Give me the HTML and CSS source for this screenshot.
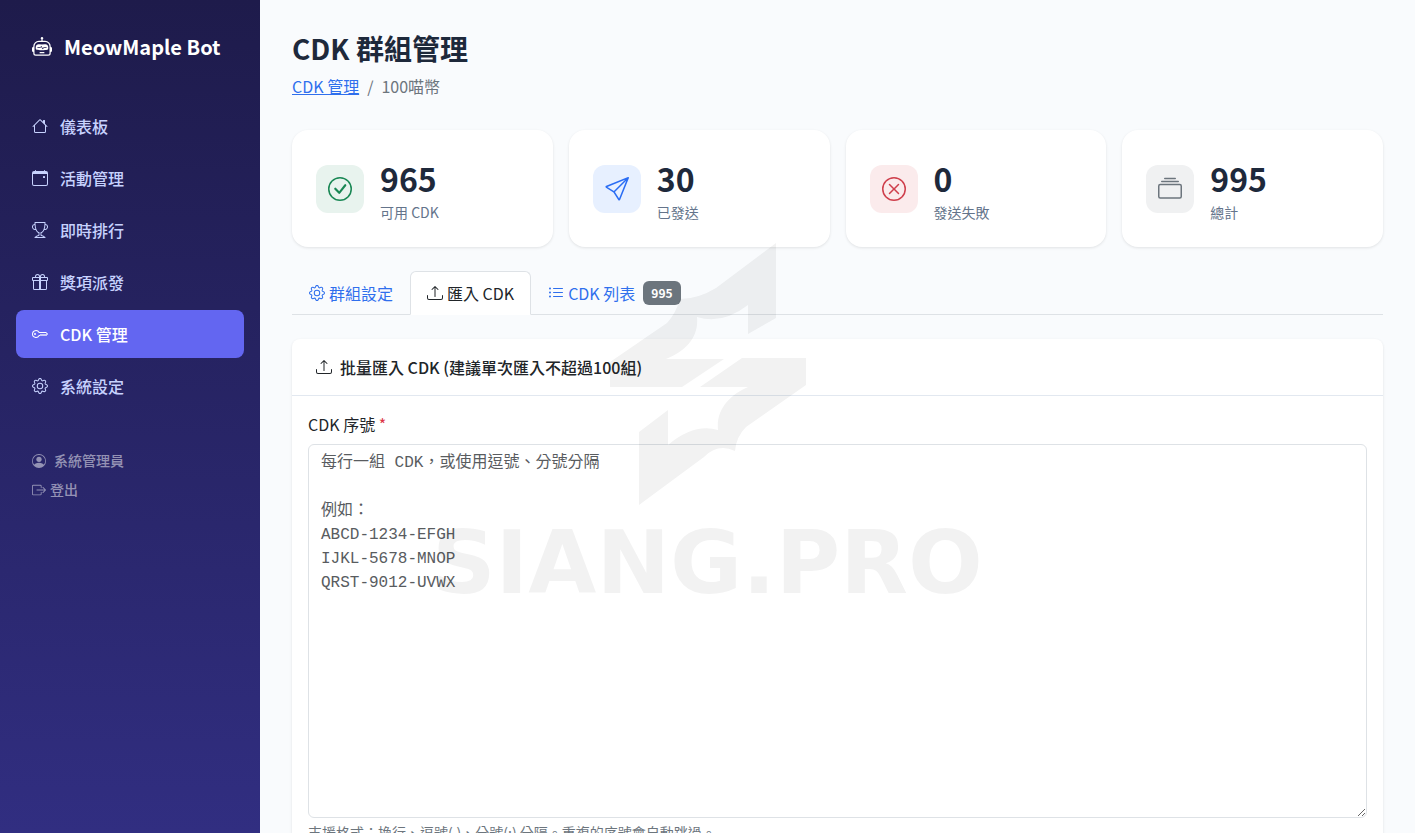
FILE: index.html
```html
<!DOCTYPE html>
<html lang="zh-Hant">
  <head>
    <title>CDK 群組管理</title>
    <meta charset="UTF-8">
    <meta name="viewport" content="width=device-width, initial-scale=1.0">
    <link rel="stylesheet" href="styles.css">
  </head>
  <body>
    <!-- icon sprite -->
    <svg class="sprite" aria-hidden="true">
      <symbol id="robot" viewBox="0 0 16 16">
        <path d="M6 12.5a.5.5 0 0 1 .5-.5h3a.5.5 0 0 1 0 1h-3a.5.5 0 0 1-.5-.5M3 8.062C3 6.76 4.235 5.765 5.53 5.886a26.6 26.6 0 0 0 4.94 0C11.765 5.765 13 6.76 13 8.062v1.157a.93.93 0 0 1-.765.935c-.845.147-2.34.346-4.235.346s-3.39-.2-4.235-.346A.93.93 0 0 1 3 9.219zm4.542-.827a.25.25 0 0 0-.217.068l-.92.9a25 25 0 0 1-1.871-.183.25.25 0 0 0-.068.495c.55.076 1.232.149 2.02.193a.25.25 0 0 0 .189-.071l.754-.736.847 1.71a.25.25 0 0 0 .404.062l.932-.97a25 25 0 0 0 1.922-.188.25.25 0 0 0-.068-.495c-.538.074-1.207.145-1.98.189a.25.25 0 0 0-.166.076l-.754.785-.842-1.7a.25.25 0 0 0-.182-.135"/>
        <path d="M8.5 1.866a1 1 0 1 0-1 0V3h-2A4.5 4.5 0 0 0 1 7.5V8a1 1 0 0 0-1 1v2a1 1 0 0 0 1 1v1a2 2 0 0 0 2 2h10a2 2 0 0 0 2-2v-1a1 1 0 0 0 1-1V9a1 1 0 0 0-1-1v-.5A4.5 4.5 0 0 0 10.5 3h-2zM14 7.5V13a1 1 0 0 1-1 1H3a1 1 0 0 1-1-1V7.5A3.5 3.5 0 0 1 5.5 4h5A3.5 3.5 0 0 1 14 7.5"/>
      </symbol>
      <symbol id="house" viewBox="0 0 16 16">
        <path d="M8.707 1.5a1 1 0 0 0-1.414 0L.646 8.146a.5.5 0 0 0 .708.708L2 8.207V13.5A1.5 1.5 0 0 0 3.5 15h9a1.5 1.5 0 0 0 1.5-1.5V8.207l.646.647a.5.5 0 0 0 .708-.708L13 5.793V2.5a.5.5 0 0 0-.5-.5h-1a.5.5 0 0 0-.5.5v1.293zM13 7.207V13.5a.5.5 0 0 1-.5.5h-9a.5.5 0 0 1-.5-.5V7.207l5-5z"/>
      </symbol>
      <symbol id="calendar" viewBox="0 0 16 16">
        <path d="M11 6.5a.5.5 0 0 1 .5-.5h1a.5.5 0 0 1 .5.5v1a.5.5 0 0 1-.5.5h-1a.5.5 0 0 1-.5-.5z"/>
        <path d="M3.5 0a.5.5 0 0 1 .5.5V1h8V.5a.5.5 0 0 1 1 0V1h1a2 2 0 0 1 2 2v11a2 2 0 0 1-2 2H2a2 2 0 0 1-2-2V3a2 2 0 0 1 2-2h1V.5a.5.5 0 0 1 .5-.5M1 4v10a1 1 0 0 0 1 1h12a1 1 0 0 0 1-1V4z"/>
      </symbol>
      <symbol id="trophy" viewBox="0 0 16 16">
        <path d="M2.5.5A.5.5 0 0 1 3 0h10a.5.5 0 0 1 .5.5q0 .807-.034 1.536a3 3 0 1 1-1.133 5.89c-.79 1.865-1.878 2.777-2.833 3.011v2.173l1.425.356c.194.048.377.135.537.255L13.3 15.1a.5.5 0 0 1-.3.9H3a.5.5 0 0 1-.3-.9l1.838-1.379c.16-.12.343-.207.537-.255L6.5 13.11v-2.173c-.955-.234-2.043-1.146-2.833-3.012a3 3 0 1 1-1.132-5.89A33 33 0 0 1 2.5.5m.099 2.54a2 2 0 0 0 .72 3.935c-.333-1.05-.588-2.346-.72-3.935m10.083 3.935a2 2 0 0 0 .72-3.935c-.133 1.59-.388 2.885-.72 3.935M3.504 1q.01.775.056 1.469c.13 2.028.457 3.546.87 4.667C5.294 9.48 6.484 10 7 10a.5.5 0 0 1 .5.5v2.61a1 1 0 0 1-.757.97l-1.426.356a.5.5 0 0 0-.179.085L4.5 15h7l-.638-.479a.5.5 0 0 0-.18-.085l-1.425-.356a1 1 0 0 1-.757-.97V10.5A.5.5 0 0 1 9 10c.516 0 1.706-.52 2.57-2.864.413-1.12.74-2.64.87-4.667q.045-.694.056-1.469z"/>
      </symbol>
      <symbol id="gift" viewBox="0 0 16 16">
        <path d="M3 2.5a2.5 2.5 0 0 1 5 0 2.5 2.5 0 0 1 5 0v.006c0 .07 0 .27-.038.494H15a1 1 0 0 1 1 1v2a1 1 0 0 1-1 1v7.5a1.5 1.5 0 0 1-1.5 1.5h-11A1.5 1.5 0 0 1 1 14.5V7a1 1 0 0 1-1-1V4a1 1 0 0 1 1-1h2.038A3 3 0 0 1 3 2.506zm1.068.5H7v-.5a1.5 1.5 0 1 0-3 0c0 .085.002.274.045.43zM9 3h2.932l.023-.07c.043-.156.045-.345.045-.43a1.5 1.5 0 0 0-3 0zM1 4v2h6V4zm8 0v2h6V4zm5 3H9v8h4.5a.5.5 0 0 0 .5-.5zm-7 8V7H2v7.5a.5.5 0 0 0 .5.5z"/>
      </symbol>
      <symbol id="key" viewBox="0 0 16 16">
        <path d="M0 8a4 4 0 0 1 7.465-2H14a.5.5 0 0 1 .354.146l1.5 1.5a.5.5 0 0 1 0 .708l-1.5 1.5a.5.5 0 0 1-.708 0L13 9.207l-.646.647a.5.5 0 0 1-.708 0L11 9.207l-.646.647a.5.5 0 0 1-.708 0L9 9.207l-.646.647A.5.5 0 0 1 8 10h-.535A4 4 0 0 1 0 8m4-3a3 3 0 1 0 2.712 4.285A.5.5 0 0 1 7.163 9h.63l.853-.854a.5.5 0 0 1 .708 0l.646.647.646-.647a.5.5 0 0 1 .708 0l.646.647.646-.647a.5.5 0 0 1 .708 0l.646.647.793-.793-1-1h-6.63a.5.5 0 0 1-.451-.285A3 3 0 0 0 4 5"/>
        <path d="M4 8a1 1 0 1 1-2 0 1 1 0 0 1 2 0"/>
      </symbol>
      <symbol id="gear" viewBox="0 0 16 16">
        <path d="M8 4.754a3.246 3.246 0 1 0 0 6.492 3.246 3.246 0 0 0 0-6.492M5.754 8a2.246 2.246 0 1 1 4.492 0 2.246 2.246 0 0 1-4.492 0"/>
        <path d="M9.796 1.343c-.527-1.79-3.065-1.79-3.592 0l-.094.319a.873.873 0 0 1-1.255.52l-.292-.16c-1.64-.892-3.433.902-2.54 2.541l.159.292a.873.873 0 0 1-.52 1.255l-.319.094c-1.79.527-1.79 3.065 0 3.592l.319.094a.873.873 0 0 1 .52 1.255l-.16.292c-.892 1.64.901 3.434 2.541 2.54l.292-.159a.873.873 0 0 1 1.255.52l.094.319c.527 1.79 3.065 1.79 3.592 0l.094-.319a.873.873 0 0 1 1.255-.52l.292.16c1.64.893 3.434-.902 2.54-2.541l-.159-.292a.873.873 0 0 1 .52-1.255l.319-.094c1.79-.527 1.79-3.065 0-3.592l-.319-.094a.873.873 0 0 1-.52-1.255l.16-.292c.893-1.64-.902-3.433-2.541-2.54l-.292.159a.873.873 0 0 1-1.255-.52zm-2.633.283c.246-.835 1.428-.835 1.674 0l.094.319a1.873 1.873 0 0 0 2.693 1.115l.291-.16c.764-.415 1.6.42 1.184 1.185l-.159.292a1.873 1.873 0 0 0 1.116 2.692l.318.094c.835.246.835 1.428 0 1.674l-.319.094a1.873 1.873 0 0 0-1.115 2.693l.16.291c.415.764-.42 1.6-1.185 1.184l-.291-.159a1.873 1.873 0 0 0-2.693 1.116l-.094.318c-.246.835-1.428.835-1.674 0l-.094-.319a1.873 1.873 0 0 0-2.692-1.115l-.292.16c-.764.415-1.6-.42-1.184-1.185l.159-.291A1.873 1.873 0 0 0 1.945 8.93l-.319-.094c-.835-.246-.835-1.428 0-1.674l.319-.094A1.873 1.873 0 0 0 3.06 4.377l-.16-.292c-.415-.764.42-1.6 1.185-1.184l.292.159a1.873 1.873 0 0 0 2.692-1.115z"/>
      </symbol>
      <symbol id="person" viewBox="0 0 16 16">
        <path d="M11 6a3 3 0 1 1-6 0 3 3 0 0 1 6 0"/>
        <path fill-rule="evenodd" d="M0 8a8 8 0 1 1 16 0A8 8 0 0 1 0 8m8-7a7 7 0 0 0-5.468 11.37C3.242 11.226 4.805 10 8 10s4.757 1.225 5.468 2.37A7 7 0 0 0 8 1"/>
      </symbol>
      <symbol id="logout" viewBox="0 0 16 16">
        <path d="M10 12.5a.5.5 0 0 1-.5.5h-8a.5.5 0 0 1-.5-.5v-9a.5.5 0 0 1 .5-.5h8a.5.5 0 0 1 .5.5v2a.5.5 0 0 0 1 0v-2A1.5 1.5 0 0 0 9.5 2h-8A1.5 1.5 0 0 0 0 3.5v9A1.5 1.5 0 0 0 1.5 14h8a1.5 1.5 0 0 0 1.5-1.5v-2a.5.5 0 0 0-1 0z"/>
        <path d="M15.854 8.354a.5.5 0 0 0 0-.708l-3-3a.5.5 0 0 0-.708.708L14.293 7.5H5.5a.5.5 0 0 0 0 1h8.793l-2.147 2.146a.5.5 0 0 0 .708.708z"/>
      </symbol>
      <symbol id="check" viewBox="0 0 16 16">
        <path d="M8 15A7 7 0 1 1 8 1a7 7 0 0 1 0 14m0 1A8 8 0 1 0 8 0a8 8 0 0 0 0 16"/>
        <path d="m10.97 4.97-.02.022-3.473 4.425-2.093-2.094a.75.75 0 0 0-1.06 1.06L6.97 11.03a.75.75 0 0 0 1.079-.02l3.992-4.99a.75.75 0 0 0-1.071-1.05"/>
      </symbol>
      <symbol id="send" viewBox="0 0 16 16">
        <path d="M15.854.146a.5.5 0 0 1 .11.54l-5.819 14.547a.75.75 0 0 1-1.329.124l-3.178-4.995L.643 7.184a.75.75 0 0 1 .124-1.33L15.314.037a.5.5 0 0 1 .54.11ZM6.636 10.07l2.761 4.338L14.13 2.576zm6.787-8.201L1.591 6.602l4.339 2.76z"/>
      </symbol>
      <symbol id="fail" viewBox="0 0 16 16">
        <path d="M8 15A7 7 0 1 1 8 1a7 7 0 0 1 0 14m0 1A8 8 0 1 0 8 0a8 8 0 0 0 0 16"/>
        <path d="M4.646 4.646a.5.5 0 0 1 .708 0L8 7.293l2.646-2.647a.5.5 0 0 1 .708.708L8.707 8l2.647 2.646a.5.5 0 0 1-.708.708L8 8.707l-2.646 2.647a.5.5 0 0 1-.708-.708L7.293 8 4.646 5.354a.5.5 0 0 1 0-.708"/>
      </symbol>
      <symbol id="collection" viewBox="0 0 16 16">
        <path d="M2.5 3.5a.5.5 0 0 1 0-1h11a.5.5 0 0 1 0 1zm2-2a.5.5 0 0 1 0-1h7a.5.5 0 0 1 0 1zM0 13a1.5 1.5 0 0 0 1.5 1.5h13A1.5 1.5 0 0 0 16 13V6a1.5 1.5 0 0 0-1.5-1.5h-13A1.5 1.5 0 0 0 0 6zm1.5.5A.5.5 0 0 1 1 13V6a.5.5 0 0 1 .5-.5h13a.5.5 0 0 1 .5.5v7a.5.5 0 0 1-.5.5z"/>
      </symbol>
      <symbol id="upload" viewBox="0 0 16 16">
        <path d="M.5 9.9a.5.5 0 0 1 .5.5v2.5a1 1 0 0 0 1 1h12a1 1 0 0 0 1-1v-2.5a.5.5 0 0 1 1 0v2.5a2 2 0 0 1-2 2H2a2 2 0 0 1-2-2v-2.5a.5.5 0 0 1 .5-.5"/>
        <path d="M7.646 1.146a.5.5 0 0 1 .708 0l3 3a.5.5 0 0 1-.708.708L8.5 2.707V11.5a.5.5 0 0 1-1 0V2.707L5.354 4.854a.5.5 0 1 1-.708-.708z"/>
      </symbol>
      <symbol id="list" viewBox="0 0 16 16">
        <path d="M5 11.5a.5.5 0 0 1 .5-.5h9a.5.5 0 0 1 0 1h-9a.5.5 0 0 1-.5-.5m0-4a.5.5 0 0 1 .5-.5h9a.5.5 0 0 1 0 1h-9a.5.5 0 0 1-.5-.5m0-4a.5.5 0 0 1 .5-.5h9a.5.5 0 0 1 0 1h-9a.5.5 0 0 1-.5-.5m-3 1a1 1 0 1 0 0-2 1 1 0 0 0 0 2m0 4a1 1 0 1 0 0-2 1 1 0 0 0 0 2m0 4a1 1 0 1 0 0-2 1 1 0 0 0 0 2"/>
      </symbol>
    </svg>

    <div class="layout">
      <aside class="sidebar">
        <div class="brand">
          <svg><use href="#robot"/></svg>
          <span>MeowMaple Bot</span>
        </div>
        <nav class="menu">
          <a href="#"><svg><use href="#house"/></svg>儀表板</a>
          <a href="#"><svg><use href="#calendar"/></svg>活動管理</a>
          <a href="#"><svg><use href="#trophy"/></svg>即時排行</a>
          <a href="#"><svg><use href="#gift"/></svg>獎項派發</a>
          <a href="#" class="active"><svg><use href="#key"/></svg>CDK 管理</a>
          <a href="#"><svg><use href="#gear"/></svg>系統設定</a>
        </nav>
        <div class="account">
          <div class="user"><svg><use href="#person"/></svg>系統管理員</div>
          <a href="#"><svg><use href="#logout"/></svg>登出</a>
        </div>
      </aside>

      <main class="content">
        <h1>CDK 群組管理</h1>
        <nav class="breadcrumb">
          <a href="#">CDK 管理</a>
          <span>/</span>
          <span>100喵幣</span>
        </nav>

        <div class="stats">
          <div class="stat">
            <div class="stat-icon green"><svg><use href="#check"/></svg></div>
            <div>
              <div class="stat-number">965</div>
              <div class="stat-label">可用 CDK</div>
            </div>
          </div>
          <div class="stat">
            <div class="stat-icon blue"><svg><use href="#send"/></svg></div>
            <div>
              <div class="stat-number">30</div>
              <div class="stat-label">已發送</div>
            </div>
          </div>
          <div class="stat">
            <div class="stat-icon red"><svg><use href="#fail"/></svg></div>
            <div>
              <div class="stat-number">0</div>
              <div class="stat-label">發送失敗</div>
            </div>
          </div>
          <div class="stat">
            <div class="stat-icon gray"><svg><use href="#collection"/></svg></div>
            <div>
              <div class="stat-number">995</div>
              <div class="stat-label">總計</div>
            </div>
          </div>
        </div>

        <div class="tabs" role="tablist">
          <button type="button" role="tab"><svg><use href="#gear"/></svg>群組設定</button>
          <button type="button" role="tab" class="active" aria-selected="true"><svg><use href="#upload"/></svg>匯入 CDK</button>
          <button type="button" role="tab"><svg><use href="#list"/></svg>CDK 列表<span class="badge">995</span></button>
        </div>

        <form class="card">
          <h2 class="card-header"><svg><use href="#upload"/></svg>批量匯入 CDK (建議單次匯入不超過100組)</h2>
          <div class="card-body">
            <label for="codes">CDK 序號 <span class="required">*</span></label>
            <textarea id="codes" rows="15" placeholder="每行一組 CDK，或使用逗號、分號分隔

例如：
ABCD-1234-EFGH
IJKL-5678-MNOP
QRST-9012-UVWX"></textarea>
            <div class="help">支援格式：換行、逗號(,)、分號(;) 分隔。重複的序號會自動跳過。</div>
          </div>
        </form>
      </main>
    </div>

    <div class="watermark">
      <svg viewBox="0 0 196 262">
        <path d="M166 0V75L138 91V62Q112 82 87 74C89 94 76 108 56 116H114L72 144H0V119L57 80Q66 70 70 56Q88 56 106 45Z"/>
        <path d="M196 115V142L136 184Q126 194 125 208Q108 200 94 214L29 262V189L58 167V202Q84 180 108 187C106 166 120 152 138 144H90L132 115Z"/>
      </svg>
      <div class="watermark-text">SIANG.PRO</div>
    </div>
  </body>
</html>
```
FILE: styles.css
```css
* {
  box-sizing: border-box;
}
body {
  margin: 0;
  font-family: "Noto Sans CJK TC", "Noto Sans", sans-serif;
  font-size: 16px;
  line-height: 24px;
  color: #212529;
  background: #f9fbfd;
}
svg {
  width: 16px;
  height: 16px;
  flex: none;
  fill: currentColor;
}
.sprite {
  display: none;
}
.layout {
  display: flex;
  height: 100vh;
}

/* Sidebar */
.sidebar {
  width: 260px;
  flex: none;
  padding: 32px 16px;
  background: linear-gradient(180deg, #1e1b4b, #312e81);
}
.brand {
  display: flex;
  align-items: center;
  gap: 12px;
  padding: 0 16px;
  color: white;
  font-size: 20px;
  font-weight: 700;
  line-height: 30px;
}
.brand svg {
  width: 20px;
  height: 20px;
}
.menu {
  display: flex;
  flex-direction: column;
  gap: 4px;
  margin-top: 40px;
}
.menu a {
  display: flex;
  align-items: center;
  gap: 12px;
  padding: 12px 16px;
  border-radius: 8px;
  color: #c7d2fe;
  font-weight: 500;
  text-decoration: none;
}
.menu .active {
  background: #6366f1;
  color: white;
}
.account {
  margin-top: 40px;
  padding: 0 16px;
  color: rgba(255, 255, 255, 0.5);
  font-size: 14px;
  font-weight: 500;
  line-height: 21px;
}
.account svg {
  width: 14px;
  height: 14px;
}
.account a {
  display: flex;
  align-items: center;
  gap: 4px;
  color: inherit;
  text-decoration: none;
}
.user {
  display: flex;
  align-items: center;
  gap: 8px;
  margin-bottom: 8px;
}

/* Page content */
.content {
  flex: 1;
  min-width: 0;
  padding: 32px;
  overflow-y: auto;
  scrollbar-width: none;
}
h1 {
  margin: 0 0 10px;
  color: #1e293b;
  font-size: 28px;
  font-weight: 700;
  line-height: 32px;
}
.breadcrumb {
  display: flex;
  gap: 8px;
  color: #6c757d;
}
.breadcrumb a {
  color: #2f6fed;
}
.stats {
  display: grid;
  grid-template-columns: repeat(4, 1fr);
  gap: 16px;
  margin: 32px 0 24px;
}
.stat {
  display: flex;
  align-items: center;
  gap: 16px;
  padding: 24px;
  background: white;
  border-radius: 16px;
  box-shadow: 0 1px 3px rgba(0, 0, 0, 0.1);
}
.stat-icon {
  display: flex;
  align-items: center;
  justify-content: center;
  width: 48px;
  height: 48px;
  border-radius: 12px;
}
.stat-icon svg {
  width: 24px;
  height: 24px;
}
.green {
  background: #e8f3ee;
  color: #198754;
}
.blue {
  background: #e7f0ff;
  color: #2a6df4;
}
.red {
  background: #fbebec;
  color: #cf3f4c;
}
.gray {
  background: #f0f1f2;
  color: #6c757d;
}
.stat-number {
  color: #1e293b;
  font-size: 32px;
  font-weight: 700;
  line-height: 48px;
}
.stat-label {
  color: #64748b;
  font-size: 14px;
  line-height: 21px;
}

/* Tabs */
.tabs {
  display: flex;
  margin-bottom: 24px;
  border-bottom: 1px solid #dee2e6;
}
.tabs button {
  display: flex;
  align-items: center;
  gap: 4px;
  margin-bottom: -1px;
  padding: 8px 16px;
  border: 1px solid transparent;
  border-radius: 6px 6px 0 0;
  background: none;
  color: #2f6fed;
  font: inherit;
  line-height: 26px;
}
.tabs .active {
  border-color: #dee2e6 #dee2e6 white;
  background: white;
  color: #212529;
}
.badge {
  margin-left: 4px;
  padding: 0 8px;
  border-radius: 6px;
  background: #6c757d;
  color: white;
  font-size: 12px;
  font-weight: 700;
  line-height: 24px;
}

/* Import form */
.card {
  background: white;
  border-radius: 8px;
  box-shadow: 0 1px 3px rgba(0, 0, 0, 0.1);
}
.card-header {
  display: flex;
  align-items: center;
  gap: 8px;
  margin: 0;
  padding: 16px 24px;
  border-bottom: 1px solid #e2e8f0;
  font-size: 16px;
  font-weight: 500;
}
.card-body {
  padding: 16px;
}
label {
  display: block;
  margin-bottom: 8px;
}
.required {
  color: #dc3545;
}
textarea {
  display: block;
  width: 100%;
  padding: 6px 12px;
  border: 1px solid #dee2e6;
  border-radius: 6px;
  background: white;
  color: #212529;
  font-family: "Liberation Mono", "Noto Sans CJK TC", monospace;
  font-size: 16px;
  line-height: 24px;
  resize: vertical;
}
textarea::placeholder {
  color: #595c5f;
}
.help {
  margin-top: 4px;
  color: #6c757d;
  font-size: 14px;
  line-height: 21px;
}

/* Watermark over the whole window */
.watermark {
  position: fixed;
  inset: 0;
  display: flex;
  flex-direction: column;
  align-items: center;
  justify-content: center;
  gap: 30px;
  color: black;
  opacity: 0.05;
  pointer-events: none;
}
.watermark svg {
  width: 196px;
  height: 262px;
}
.watermark-text {
  font-family: "DejaVu Sans", sans-serif;
  font-size: 88px;
  font-weight: 700;
  line-height: 56px;
}
```
